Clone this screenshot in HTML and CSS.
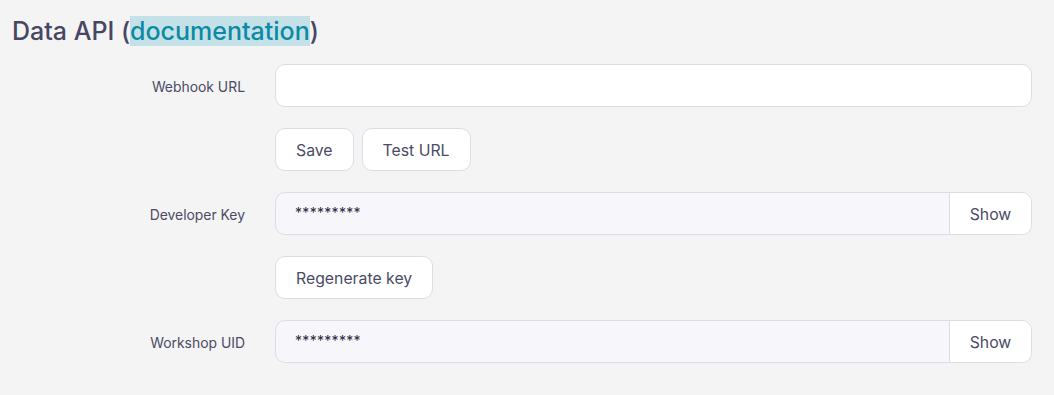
FILE: index.html
```html
<!DOCTYPE html>
<html lang="en">
<head>
    <meta charset="UTF-8">
    <title>Data API</title>
    <link rel="stylesheet" href="styles.css">
</head>
<body>
    <div class="panel">
        <h2 class="title">Data API (<a href="#" class="doc-link">documentation</a>)</h2>

        <div class="form">
            <label class="label" for="webhook">Webhook URL</label>
            <input class="field" id="webhook" type="text">

            <div></div>
            <div class="actions">
                <button class="btn">Save</button>
                <button class="btn">Test URL</button>
            </div>

            <label class="label">Developer Key</label>
            <div class="group">
                <span class="secret">*********</span>
                <button class="group-btn">Show</button>
            </div>

            <div></div>
            <div class="actions">
                <button class="btn">Regenerate key</button>
            </div>

            <label class="label">Workshop UID</label>
            <div class="group">
                <span class="secret">*********</span>
                <button class="group-btn">Show</button>
            </div>
        </div>
    </div>
</body>
</html>
```

FILE: styles.css
```css
* {
    margin: 0;
    padding: 0;
    box-sizing: border-box;
}

body {
    font-family: Inter, 'Noto Sans', sans-serif;
    background: #f4f4f5;
    color: #4b4b66;
}

.panel {
    padding: 15px 22px 0 12px;
}

.title {
    font-size: 25px;
    font-weight: 500;
    line-height: 33px;
    color: #474763;
    margin-bottom: 16px;
}

.doc-link {
    color: #0b8aa6;
    text-decoration: none;
    background: #c5e1e8;
}

.form {
    display: grid;
    grid-template-columns: 233px 1fr;
    grid-auto-rows: 43px;
    column-gap: 30px;
    row-gap: 21px;
}

.label {
    display: flex;
    align-items: center;
    justify-content: flex-end;
    padding-top: 2px;
    font-size: 13.9px;
    color: #4b4b63;
}

.field {
    width: 100%;
    height: 43px;
    border: 1px solid #dddde9;
    border-radius: 10px;
    background: #fff;
    font: inherit;
    padding: 0 18px;
    outline: none;
}

.actions {
    display: flex;
    gap: 8px;
}

.btn {
    height: 43px;
    padding: 2px 20px 0;
    border: 1px solid #dddde9;
    border-radius: 10px;
    background: #fff;
    font-family: inherit;
    font-size: 15.8px;
    color: #4b4b66;
    cursor: pointer;
}

.group {
    display: flex;
    height: 43px;
    border: 1px solid #dddde9;
    border-radius: 10px;
    overflow: hidden;
    background: #f7f7fb;
}

.secret {
    flex: 1;
    display: flex;
    align-items: center;
    padding: 0 19px 2px;
    font-size: 14px;
    color: #2a2a3a;
    letter-spacing: 0.3px;
}

.group-btn {
    width: 82px;
    padding-top: 2px;
    border: none;
    border-left: 1px solid #dddde9;
    background: #fff;
    font-family: inherit;
    font-size: 15.8px;
    color: #4b4b66;
    cursor: pointer;
}
```
